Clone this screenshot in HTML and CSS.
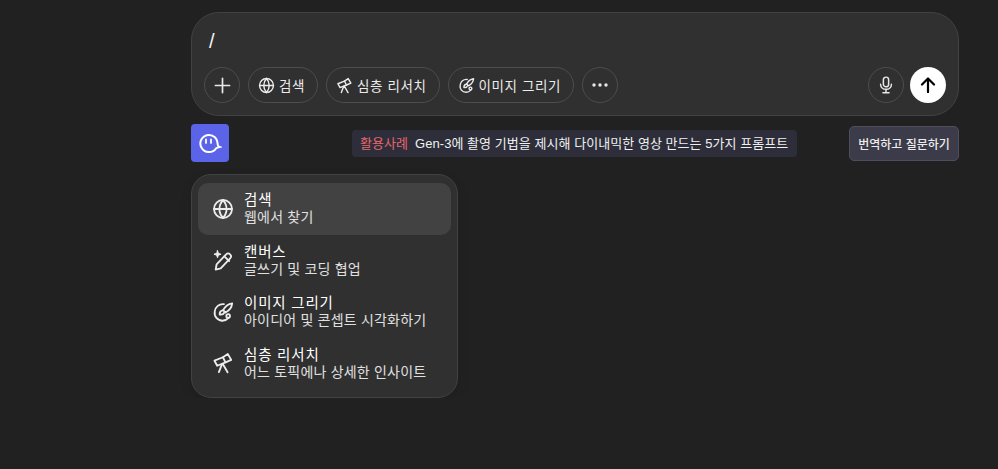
FILE: index.html
```html
<!DOCTYPE html>
<html lang="ko">

<head>
    <meta charset="UTF-8">
    <title>Chat</title>
    <link rel="stylesheet" href="styles.css">
</head>

<body>
    <svg class="sprites" width="0" height="0">
        <symbol id="i-globe" viewBox="0 0 24 24" fill="none" stroke="currentColor" stroke-width="2" stroke-linecap="round" stroke-linejoin="round">
            <circle cx="12" cy="12" r="9.800" />
            <path d="M2.200 12h19.600M12 2.200c-5.200 5.800-5.200 13.800 0 19.600M12 2.200c5.200 5.800 5.200 13.800 0 19.600" />
        </symbol>
        <symbol id="i-scope" viewBox="0 0 24 24" fill="none" stroke="currentColor" stroke-width="2" stroke-linecap="round" stroke-linejoin="round">
            <path d="M2.700 9.500l3 5.500 9-3.700-2.800-5.600z" />
            <path d="M12 5.700l5.200-3.500 3.800 6.400-6.200 2.700" />
            <path d="M10.800 13.500L7.500 22M11.800 13l5.200 9" />
        </symbol>
        <symbol id="i-palette" viewBox="0 0 24 24" fill="none" stroke="currentColor" stroke-width="2" stroke-linecap="round" stroke-linejoin="round">
            <path d="M13 3.500A8.800 8.800 0 0 0 3 11.500c-.9 5.300 3 10 8.400 10 2.600 0 5-1.100 6.700-3" />
            <path d="M22 2.500c-3.900.6-8 3.900-9.900 7.500l2.700 2.500c3.800-2 6.800-6.100 7.200-10z" />
            <path d="M12 10.200c-2.400.2-3.800 1.900-3.600 4.700 2.900.3 4.700-.8 5.500-3.100" />
            <circle cx="17.600" cy="16.300" r="2" />
        </symbol>
        <symbol id="i-pencil" viewBox="0 0 24 24" fill="none" stroke="currentColor" stroke-width="2" stroke-linecap="round" stroke-linejoin="round">
            <path d="M4 22.500l1-5.600 10.400-11c1.200-1.200 3.100-1.300 4.300-.1 1.300 1.200 1.300 3.100.1 4.400L9.500 21.200z" />
            <path d="M13.400 8l5.300 5.100" />
            <path d="M6 1.800l1 2.900 2.900 1-2.900 1-1 2.900-1-2.900-2.900-1 2.900-1z" fill="currentColor" stroke-width="1" />
        </symbol>
    </svg>

    <div class="page">
        <div class="composer">
            <div class="prompt">/</div>
            <div class="toolbar">
                <button class="round-btn">
                    <svg class="icon-plus" viewBox="0 0 18 18"><path d="M9 1.500v15M1.500 9h15" /></svg>
                </button>
                <button class="chip"><svg class="icon-sm"><use href="#i-globe" /></svg>검색</button>
                <button class="chip"><svg class="icon-sm"><use href="#i-scope" /></svg>심층 리서치</button>
                <button class="chip"><svg class="icon-sm"><use href="#i-palette" /></svg>이미지 그리기</button>
                <button class="round-btn">
                    <svg class="icon-more" viewBox="0 0 16 4"><circle cx="2" cy="2" r="1.700" /><circle cx="8" cy="2" r="1.700" /><circle cx="14" cy="2" r="1.700" /></svg>
                </button>
                <button class="round-btn push-right">
                    <svg class="icon-mic" viewBox="0 0 16 20">
                        <rect x="5" y="1" width="6" height="11" rx="3" />
                        <path d="M1.800 9c0 3.500 2.800 5.900 6.200 5.900s6.200-2.400 6.200-5.900M8 15v3.500M4.500 18.800h7" />
                    </svg>
                </button>
                <button class="send-btn">
                    <svg class="icon-send" viewBox="0 0 16 16"><path d="M8 15V1.800M2 7.500l6-6 6 6" /></svg>
                </button>
            </div>
        </div>

        <div class="under-row">
            <div class="logo">
                <svg viewBox="0 0 24 24" class="icon-logo">
                    <path d="M11 3.900a8.600 8.600 0 1 0 7.200 13.300c.8-.6 2-.9 3.300-1.200-1.600-.6-2.100-1.800-1.900-4A8.600 8.600 0 0 0 11 3.900z" />
                    <path class="eye" d="M8 8.500v3.400M13 8.500v3.400" />
                </svg>
            </div>
            <div class="ticker"><span class="ticker-tag">활용사례</span>Gen-3에 촬영 기법을 제시해 다이내믹한 영상 만드는 5가지 프롬프트</div>
            <button class="translate-btn">번역하고 질문하기</button>
        </div>

        <div class="menu">
            <div class="menu-item active">
                <svg class="icon-lg"><use href="#i-globe" /></svg>
                <div>
                    <div class="menu-title">검색</div>
                    <div class="menu-desc">웹에서 찾기</div>
                </div>
            </div>
            <div class="menu-item">
                <svg class="icon-lg"><use href="#i-pencil" /></svg>
                <div>
                    <div class="menu-title">캔버스</div>
                    <div class="menu-desc">글쓰기 및 코딩 협업</div>
                </div>
            </div>
            <div class="menu-item">
                <svg class="icon-lg"><use href="#i-palette" /></svg>
                <div>
                    <div class="menu-title">이미지 그리기</div>
                    <div class="menu-desc">아이디어 및 콘셉트 시각화하기</div>
                </div>
            </div>
            <div class="menu-item">
                <svg class="icon-lg"><use href="#i-scope" /></svg>
                <div>
                    <div class="menu-title">심층 리서치</div>
                    <div class="menu-desc">어느 토픽에나 상세한 인사이트</div>
                </div>
            </div>
        </div>
    </div>
</body>

</html>
```

FILE: styles.css
```css
body {
    font-family: 'Liberation Sans', 'Noto Sans CJK KR', sans-serif;
    background-color: #212121;
    color: #ececec;
    margin: 0;
    padding: 0;
    overflow: hidden;
}

button {
    font-family: inherit;
    color: inherit;
    background: none;
    cursor: pointer;
    padding: 0;
}

.sprites {
    position: absolute;
}

.page {
    width: 768px;
    margin-left: 191px;
    padding-top: 12px;
}

.composer {
    box-sizing: border-box;
    height: 104px;
    background-color: #303030;
    border: 1px solid #424242;
    border-radius: 28px;
    padding: 0 12px;
}

.prompt {
    font-family: 'Liberation Sans', sans-serif;
    font-size: 20px;
    font-weight: 500;
    line-height: 24px;
    padding: 16px 0 0 5px;
    height: 39px;
    box-sizing: border-box;
    color: #f2f2f2;
}

.toolbar {
    display: flex;
    gap: 8px;
    margin-top: 15px;
}

.round-btn {
    width: 36px;
    height: 36px;
    border: 1px solid #4d4d4d;
    border-radius: 50%;
    display: flex;
    align-items: center;
    justify-content: center;
}

.push-right {
    margin-left: auto;
    margin-right: -2px;
}

.chip {
    height: 36px;
    border: 1px solid #4d4d4d;
    border-radius: 18px;
    padding: 0 12px 0 9px;
    display: flex;
    align-items: center;
    gap: 4px;
    font-size: 13.500px;
    letter-spacing: 0.6px;
    white-space: nowrap;
}

.icon-sm {
    width: 17px;
    height: 17px;
    flex: none;
}

.icon-lg {
    width: 22px;
    height: 22px;
    flex: none;
}

.icon-plus {
    width: 17px;
    height: 17px;
    fill: none;
    stroke: #e8e8e8;
    stroke-width: 1.800;
    stroke-linecap: round;
}

.icon-more {
    width: 16px;
    height: 4px;
    fill: #e8e8e8;
}

.icon-mic {
    width: 14px;
    height: 18px;
    fill: none;
    stroke: #e8e8e8;
    stroke-width: 1.700;
    stroke-linecap: round;
}

.send-btn {
    width: 36px;
    height: 36px;
    border: none;
    border-radius: 50%;
    background-color: #fff;
    display: flex;
    align-items: center;
    justify-content: center;
}

.icon-send {
    width: 16px;
    height: 16px;
    fill: none;
    stroke: #000;
    stroke-width: 2.200;
    stroke-linecap: round;
    stroke-linejoin: round;
}

.under-row {
    display: flex;
    align-items: center;
    margin-top: 8px;
    height: 38px;
}

.logo {
    width: 38px;
    height: 38px;
    border-radius: 4px;
    background-color: #5b64e8;
    display: flex;
    align-items: center;
    justify-content: center;
}

.icon-logo {
    width: 24px;
    height: 24px;
    fill: none;
    stroke: #fff;
    stroke-width: 2;
}

.icon-logo .eye {
    stroke-linecap: round;
    stroke-width: 1.800;
}

.ticker {
    margin-left: 123px;
    margin-top: 1px;
    height: 27px;
    line-height: 28px;
    padding: 0 9px 0 8px;
    background-color: #2d2e3a;
    border-radius: 4px;
    font-size: 13px;
    letter-spacing: 0.05px;
    color: #f0f0f0;
    white-space: nowrap;
}

.ticker-tag {
    color: #e8676c;
    margin-right: 7px;
}

.translate-btn {
    margin-left: auto;
    margin-top: 1px;
    width: 110px;
    height: 35px;
    background-color: #3b3b49;
    border: 1px solid #4f4f5c;
    border-radius: 5px;
    font-size: 12px;
    font-weight: 500;
    color: #ececec;
    white-space: nowrap;
}

.menu {
    box-sizing: border-box;
    width: 267px;
    height: 224px;
    margin-top: 12px;
    padding: 8px 6px;
    background-color: #303030;
    border: 1px solid #424242;
    border-radius: 20px;
    box-shadow: 0 4px 12px rgba(0, 0, 0, 0.1);
}

.menu-item {
    height: 51.500px;
    border-radius: 10px;
    padding: 0 14px;
    display: flex;
    align-items: center;
    gap: 10px;
}

.menu-item.active {
    background-color: #424242;
}

.menu-title {
    font-size: 14.500px;
    font-weight: 400;
    letter-spacing: 0.8px;
    line-height: 18px;
    color: #fff;
}

.menu-desc {
    font-size: 14px;
    letter-spacing: 0.2px;
    line-height: 17px;
    color: #e0e0e0;
}
```
